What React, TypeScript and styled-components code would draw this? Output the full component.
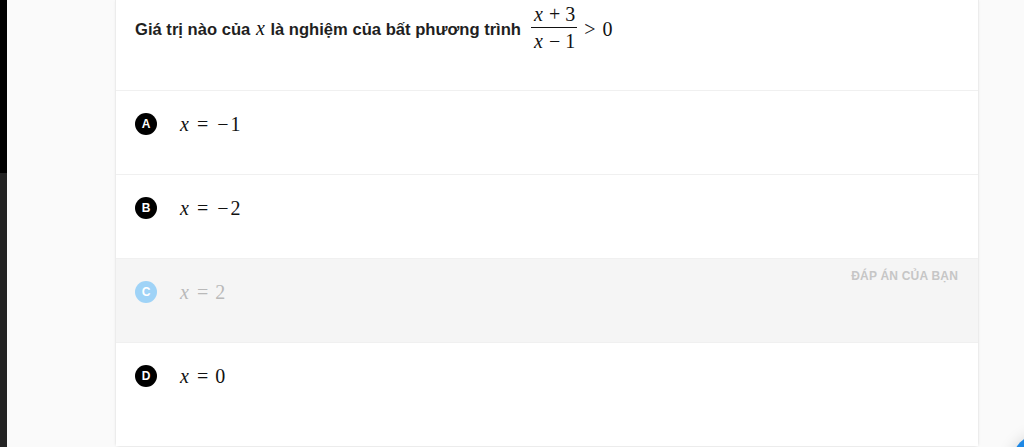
import React from 'react';
import styled, {createGlobalStyle} from 'styled-components';

const GlobalStyle = createGlobalStyle`
    html, body {
        margin: 0;
        padding: 0;
        height: 100%;
        overflow: hidden;
        background: #fafafa;
    }
    #root {
        height: 100%;
    }
`;

const Page = styled.div`
    display: flex;
    height: 447px;
    font-family: "Liberation Sans", Arial, sans-serif;
`;

const Sidebar = styled.div`
    width: 7px;
    flex-shrink: 0;
    display: flex;
    flex-direction: column;
`;

const SidebarTop = styled.div`
    height: 173px;
    background: #000;
`;

const SidebarBottom = styled.div`
    flex: 1;
    background: #232323;
`;

const Main = styled.main`
    flex: 1;
    padding-left: 108px;
`;

const Card = styled.section`
    width: 862px;
    background: #fff;
    border: 1px solid #ececec;
    border-top: none;
    border-radius: 0 0 5px 5px;
    box-shadow: 0 1px 3px rgba(0, 0, 0, 0.05);
`;

const Question = styled.div`
    height: 91px;
    box-sizing: border-box;
    padding: 6px 19px 0;
    border-bottom: 1px solid #f0f0f0;
    font-size: 16.6px;
    font-weight: 700;
    color: #1f1f1f;
    display: flex;
    align-items: flex-start;
`;

const QuestionText = styled.div`
    display: flex;
    align-items: center;
    gap: 10px;
`;

const Option = styled.div<{ $selected?: boolean; $last?: boolean }>`
    position: relative;
    height: ${({$last}) => ($last ? '103px' : '84px')};
    box-sizing: border-box;
    padding: 22px 19px 0;
    display: flex;
    align-items: flex-start;
    gap: 22px;
    background: ${({$selected}) => ($selected ? '#f5f5f5' : '#fff')};
    border-bottom: ${({$last}) => ($last ? 'none' : '1px solid #f0f0f0')};
`;

const Badge = styled.span<{ $selected?: boolean }>`
    width: 22px;
    height: 22px;
    border-radius: 50%;
    flex-shrink: 0;
    display: flex;
    align-items: center;
    justify-content: center;
    background: ${({$selected}) => ($selected ? '#9fd3f7' : '#000')};
    color: #fff;
    font-size: 12px;
    font-weight: 700;
`;

const SelectedTag = styled.span`
    position: absolute;
    top: 10px;
    right: 20px;
    font-size: 12px;
    font-weight: 700;
    color: #c6c6c6;
    letter-spacing: 0.2px;
`;

const MathLine = styled.span<{ $muted?: boolean }>`
    font-family: "Liberation Serif", "DejaVu Serif", serif;
    font-size: 20px;
    font-weight: 400;
    line-height: 22px;
    color: ${({$muted}) => ($muted ? '#b9b9b9' : '#111')};
    display: inline-flex;
    align-items: center;
    white-space: nowrap;
`;

const Var = styled.i`
    font-style: italic;
    padding: 0 1px;
`;

const Op = styled.span<{ $bin?: boolean }>`
    margin: 0 ${({$bin}) => ($bin ? '5px' : '7px')};
`;

const Neg = styled.span`
    margin: 0 2px;
`;

const Frac = styled.span`
    display: inline-flex;
    flex-direction: column;
    align-items: center;
    margin-top: -2px;
`;

const FracPart = styled.span`
    padding: 0 2px;
    line-height: 20px;
`;

const FracBar = styled.span`
    align-self: stretch;
    height: 1px;
    background: #111;
    margin: 3px 0 3px;
`;

const Fab = styled.div`
    position: fixed;
    left: 1012px;
    top: 434px;
    width: 56px;
    height: 56px;
    border-radius: 50%;
    background: #1e88e5;
    box-shadow: 0 2px 16px rgba(0, 0, 0, 0.18);
`;

type Item = { letter: string; value: string; negative?: boolean };

const items: Item[] = [
    {letter: 'A', value: '1', negative: true},
    {letter: 'B', value: '2', negative: true},
    {letter: 'C', value: '2'},
    {letter: 'D', value: '0'},
];

const selected = 'C';

const Equation: React.FC<{ item: Item; muted?: boolean }> = ({item, muted}) => (
    <MathLine $muted={muted}>
        <Var>x</Var>
        <Op>=</Op>
        {item.negative && <Neg>{'\u2212'}</Neg>}{item.value}
    </MathLine>
);

export default function App() {
    return (
        <>
            <GlobalStyle/>
            <Page>
                <Sidebar>
                    <SidebarTop/>
                    <SidebarBottom/>
                </Sidebar>
                <Main>
                    <Card>
                        <Question>
                            <QuestionText>
                                <span>
                                    Giá trị nào của <MathLine><Var>x</Var></MathLine> là nghiệm của bất phương trình
                                </span>
                                <MathLine>
                                    <Frac>
                                        <FracPart><Var>x</Var><Op $bin>+</Op>3</FracPart>
                                        <FracBar/>
                                        <FracPart><Var>x</Var><Op $bin>{'\u2212'}</Op>1</FracPart>
                                    </Frac>
                                    <Op>&gt;</Op>0
                                </MathLine>
                            </QuestionText>
                        </Question>
                        {items.map((item, i) => {
                            const isSel = item.letter === selected;
                            return (
                                <Option key={item.letter} $selected={isSel} $last={i === items.length - 1}>
                                    <Badge $selected={isSel}>{item.letter}</Badge>
                                    <Equation item={item} muted={isSel}/>
                                    {isSel && <SelectedTag>ĐÁP ÁN CỦA BẠN</SelectedTag>}
                                </Option>
                            );
                        })}
                    </Card>
                </Main>
                <Fab/>
            </Page>
        </>
    );
}
